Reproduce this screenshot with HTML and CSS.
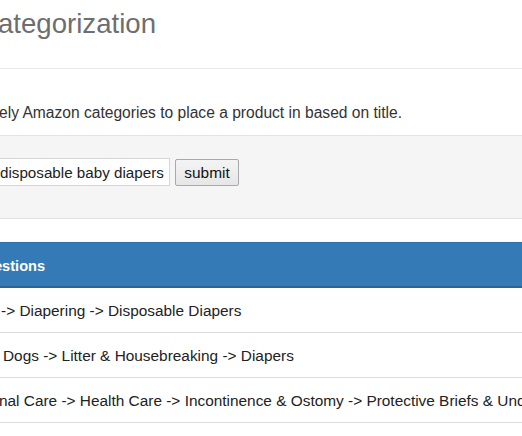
FILE: index.html
```html
<!DOCTYPE html>
<html>
<head>
<meta charset="utf-8">
<link rel="stylesheet" href="styles.css">
</head>
<body>
<div class="page">
  <header class="page-header">
    <h1 class="title">ategorization</h1>
  </header>
  <p class="lead">ely Amazon categories to place a product in based on title.</p>
  <div class="well">
    <form class="search">
      <input class="query" type="text" value="disposable baby diapers">
      <button class="submit" type="button">submit</button>
    </form>
  </div>
  <div class="panel">
    <div class="panel-heading"><span class="heading-text">estions</span></div>
    <ul class="list">
      <li class="item"><span class="r1">-&gt; Diapering -&gt; Disposable Diapers</span></li>
      <li class="item"><span class="r2">Dogs -&gt; Litter &amp; Housebreaking -&gt; Diapers</span></li>
      <li class="item"><span class="r3">nal Care -&gt; Health Care -&gt; Incontinence &amp; Ostomy -&gt; Protective Briefs &amp; Und</span></li>
    </ul>
  </div>
</div>
</body>
</html>
```

FILE: styles.css
```css
html, body {
  margin: 0;
  padding: 0;
  background: #fff;
  overflow: hidden;
}
body {
  width: 522px;
  height: 436px;
  font-family: "Liberation Sans", Arial, Helvetica, sans-serif;
  font-size: 15.4px;
  line-height: 22px;
  color: #333;
}
.page {
  width: 522px;
}
.page-header {
  padding-top: 4px;
  padding-bottom: 24px;
  border-bottom: 1px solid #eaeaea;
}
.title {
  margin: 0 0 0 -2px;
  font-size: 27.6px;
  line-height: 40px;
  font-weight: normal;
  color: #6e6e6e;
  white-space: nowrap;
}
.lead {
  margin: 33px 0 11px -1px;
  font-size: 15.6px;
  white-space: nowrap;
}
.well {
  background: #f5f5f5;
  border-top: 1px solid #e3e3e3;
  border-bottom: 1px solid #e3e3e3;
  padding: 22px 0 32px;
}
.search {
  display: flex;
  align-items: center;
  margin: 0;
  height: 28px;
}
.query {
  box-sizing: border-box;
  width: 177px;
  height: 28px;
  margin: 0 0 0 -7px;
  padding: 0 2px 0 6px;
  border: 1px solid #d6d6d6;
  background: #fff;
  font-family: inherit;
  font-size: 15.2px;
  color: #222;
}
.submit {
  box-sizing: border-box;
  width: 64px;
  height: 27px;
  margin: 1px 0 0 5px;
  padding: 0;
  border: 1px solid #a9a9a9;
  border-radius: 2px;
  background: linear-gradient(#f4f4f4, #e6e6e6);
  font-family: inherit;
  font-size: 15.4px;
  color: #111;
}
.panel {
  margin-top: 23px;
}
.panel-heading {
  box-sizing: border-box;
  height: 46px;
  padding: 11px 0 0 0;
  background: #337ab7;
  border-top: 1px solid #2e6fa8;
  border-bottom: 2px solid #2a6496;
  color: #fff;
  font-size: 14.6px;
  line-height: 24px;
  font-weight: bold;
  white-space: nowrap;
}
.heading-text {
  margin-left: -6px;
}
.list {
  list-style: none;
  margin: 0;
  padding: 0;
}
.item {
  box-sizing: border-box;
  height: 45px;
  padding: 12px 0 0 0;
  border-bottom: 1px solid #dcdcdc;
  white-space: nowrap;
  color: #222;
}
.r1 { margin-left: 1px; }
.r2 { margin-left: 3px; }
.r3 { margin-left: -1px; }
```
